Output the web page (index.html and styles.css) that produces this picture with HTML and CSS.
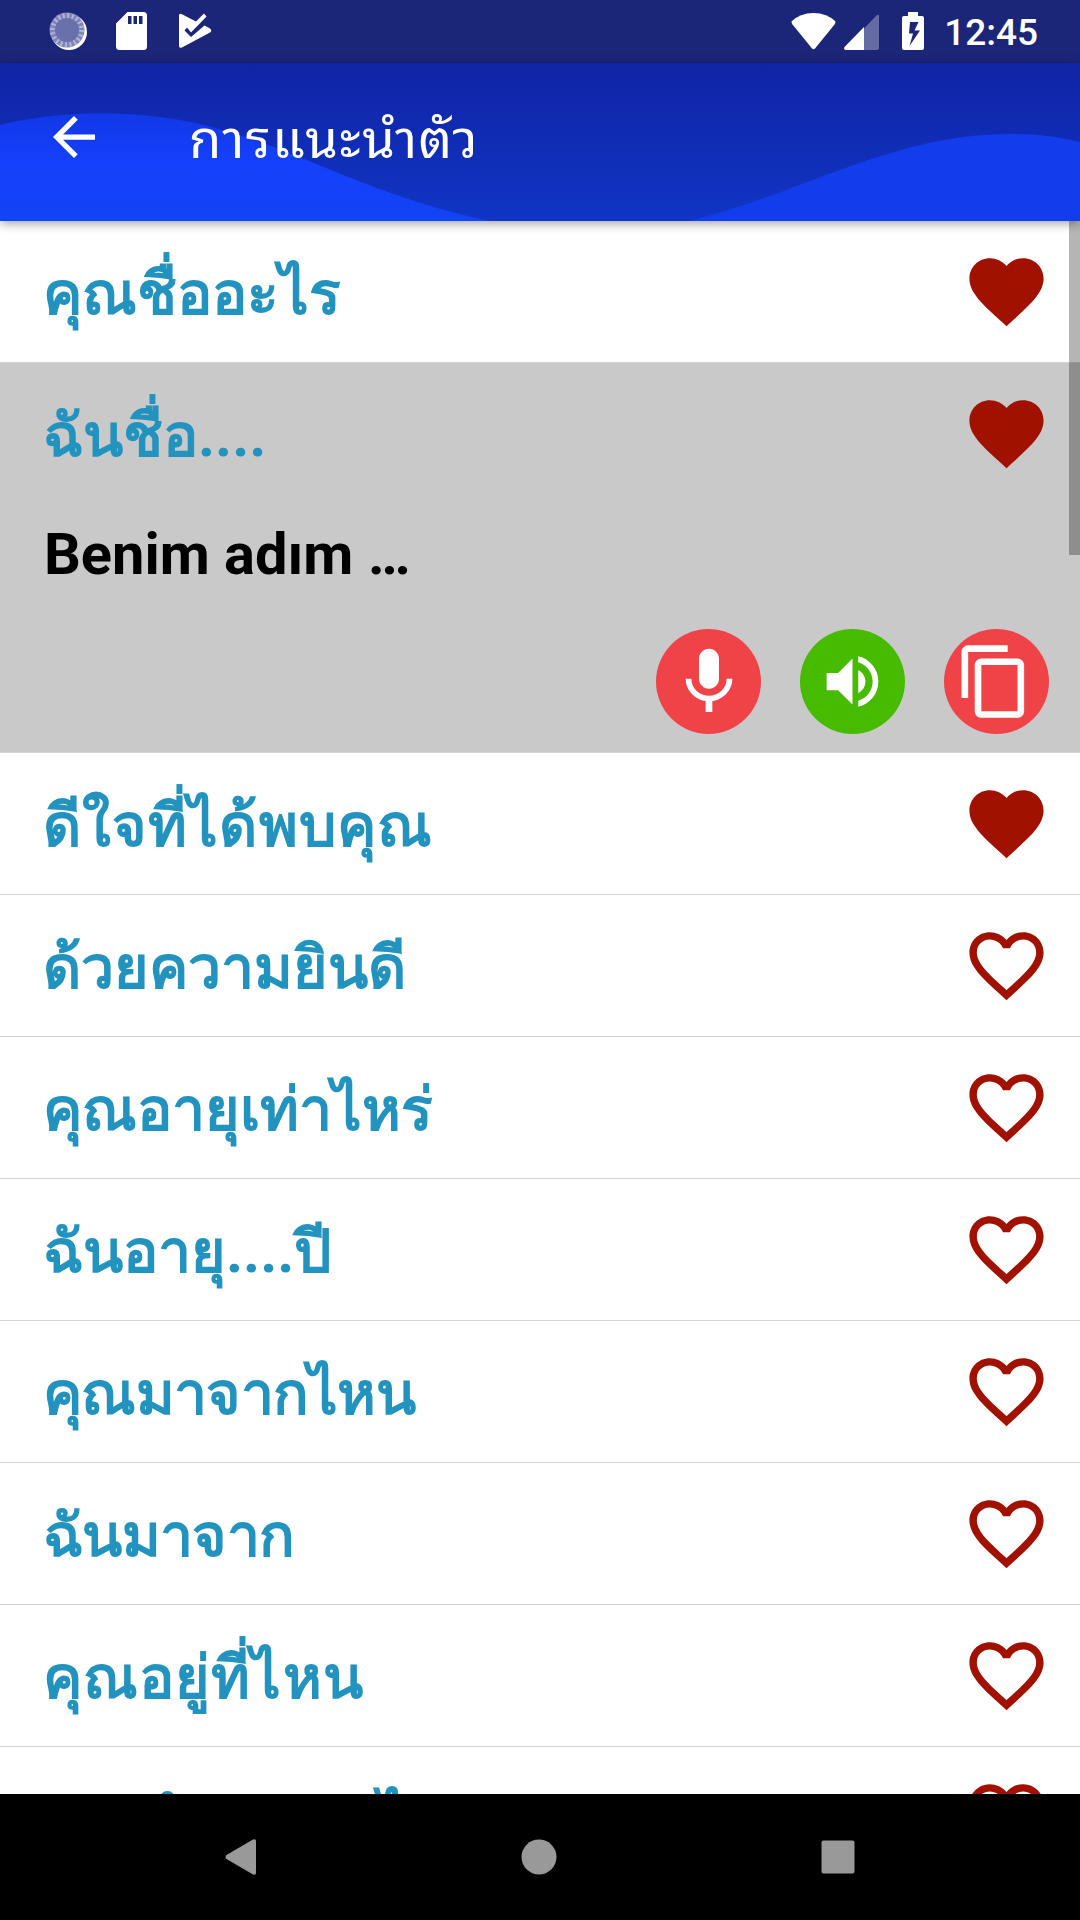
FILE: index.html
```html
<!DOCTYPE html>
<html lang="th">
<head>
    <meta charset="UTF-8">
    <meta name="viewport" content="width=device-width, initial-scale=1.0">
    <title>การแนะนำตัว</title>
    <link rel="stylesheet" href="styles.css">
</head>
<body>
    <svg class="sprite" width="0" height="0">
        <symbol id="heart" viewBox="0 0 24 24">
            <path d="M12 21.35l-1.45-1.32C5.4 15.36 2 12.28 2 8.5 2 5.42 4.42 3 7.5 3c1.74 0 3.41.81 4.5 2.09C13.09 3.81 14.76 3 16.5 3 19.58 3 22 5.42 22 8.5c0 3.78-3.4 6.86-8.55 11.54L12 21.35z"/>
        </symbol>
        <symbol id="heart-border" viewBox="0 0 24 24">
            <path d="M16.5 3c-1.74 0-3.41.81-4.5 2.09C10.91 3.81 9.24 3 7.5 3 4.42 3 2 5.42 2 8.5c0 3.78 3.4 6.86 8.55 11.54L12 21.35l1.45-1.32C18.6 15.36 22 12.28 22 8.5 22 5.42 19.58 3 16.5 3zm-4.4 15.55l-.1.1-.1-.1C7.14 14.24 4 11.39 4 8.5 4 6.5 5.5 5 7.5 5c1.54 0 3.04.99 3.57 2.36h1.87C13.46 5.99 14.96 5 16.5 5c2 0 3.5 1.5 3.5 3.5 0 2.89-3.14 5.74-7.9 10.05z"/>
        </symbol>
    </svg>

    <div class="status-bar">
        <div class="status-left">
            <svg width="38" height="38" viewBox="0 0 38 38">
                <circle cx="20" cy="20" r="18" fill="#fff"/>
                <circle cx="18" cy="18" r="17.5" fill="#8085b8"/>
                <circle cx="18" cy="18" r="14.5" fill="none" stroke="#b4b8d8" stroke-width="5" stroke-dasharray="1.8 2.75"/>
                <circle cx="18" cy="18" r="12" fill="#6a70ac"/>
            </svg>
            <svg width="31" height="38" viewBox="0 0 31 38">
                <path fill="#fff" fill-rule="evenodd" d="M11.500 0H27.500Q31 0 31 3.500V34.500Q31 38 27.500 38H3.500Q0 38 0 34.500V11.500zM12 4v8h3.500V4zM17.500 4v8H21V4zM23 4v8h3.500V4z"/>
            </svg>
            <svg width="33" height="36" viewBox="0 0 33 36">
                <path fill="#fff" d="M0 2.500Q0 0 2.500 1L17 8.500 25 .5l2.500 3L12 19.500 8 14.500 5.500 17.500 12 24 25.500 12.500 31 15.500Q33.500 17.500 31 19.500L3 34.500Q0 35.500 0 33z"/>
            </svg>
        </div>
        <div class="status-right">
            <svg class="wifi" width="45" height="37" viewBox="0 0 45 37">
                <path fill="#fff" d="M.5 8.500Q9 0 22.500 0T44.500 8.500Q44.500 10 43.500 11.500L24 35.500Q22.500 37 21 35.500L1.500 11.500Q.5 10 .5 8.500z"/>
            </svg>
            <svg class="signal" width="35" height="36" viewBox="0 0 35 36">
                <path fill="#fff" fill-opacity=".32" d="M20 14.500L32.500 1.500Q35 0 35 2V34Q35 36 33 36H20z"/>
                <path fill="#fff" d="M20 13V36H1.500Q-.5 35.500 .5 33z"/>
            </svg>
            <svg class="battery" width="22" height="38" viewBox="0 0 22 38">
                <path fill="#fff" fill-rule="evenodd" d="M6 0H16V4H20Q22 4 22 6V36Q22 38 20 38H2Q0 38 0 36V6Q0 4 2 4H6zM8 10L7 21.500h4L7.500 34 18 18.500H12.500L16.500 10z"/>
            </svg>
            <span class="clock">12:45</span>
        </div>
    </div>

    <header class="app-bar">
        <svg class="waves" viewBox="0 0 1080 158" preserveAspectRatio="none">
            <defs>
                <linearGradient id="waveLeft" x1="0" y1="0" x2="0" y2="1">
                    <stop offset="0" stop-color="#1238e6"/>
                    <stop offset=".45" stop-color="#1540fc"/>
                    <stop offset="1" stop-color="#1243f4"/>
                </linearGradient>
            </defs>
            <path fill="url(#waveLeft)" d="M0 62C60 47 135 46 200 61C300 85 365 132 490 158H0z"/>
            <path fill="#133dec" d="M688 158C800 132 890 71 1010 71Q1045 70 1080 79V158z"/>
        </svg>
        <svg class="back" width="42" height="42" viewBox="4 4 16 16">
            <path fill="#fff" d="M20 11H7.830l5.590-5.590L12 4l-8 8 8 8 1.410-1.410L7.830 13H20v-2z"/>
        </svg>
        <h1>การแนะนำตัว</h1>
    </header>

    <main class="phrases">
        <div class="phrase">
            <div class="phrase-head">
                <span class="phrase-text">คุณชื่ออะไร</span>
                <svg class="heart"><use href="#heart"/></svg>
            </div>
        </div>
        <div class="phrase open">
            <div class="phrase-head">
                <span class="phrase-text">ฉันชื่อ....</span>
                <svg class="heart"><use href="#heart"/></svg>
            </div>
            <div class="translation">Benim adım …</div>
            <div class="actions">
                <button class="round red">
                    <svg width="80" height="80" viewBox="0 0 24 24"><path d="M12 14c1.660 0 2.990-1.340 2.990-3L15 5c0-1.660-1.340-3-3-3S9 3.340 9 5v6c0 1.660 1.340 3 3 3zm5.300-3c0 3-2.540 5.100-5.300 5.100S6.700 14 6.700 11H5c0 3.410 2.720 6.230 6 6.720V21h2v-3.280c3.280-.48 6-3.300 6-6.720h-1.700z"/></svg>
                </button>
                <button class="round green">
                    <svg width="69" height="69" viewBox="0 0 24 24"><path d="M3 9v6h4l5 5V4L7 9H3zm13.500 3c0-1.770-1.020-3.290-2.500-4.030v8.050c1.480-.73 2.500-2.250 2.500-4.020zM14 3.230v2.060c2.890.86 5 3.540 5 6.710s-2.110 5.850-5 6.710v2.060c4.010-.91 7-4.490 7-8.770s-2.990-7.860-7-8.770z"/></svg>
                </button>
                <button class="round red copy">
                    <svg width="79" height="79" viewBox="0 0 24 24"><path d="M16 1H4c-1.100 0-2 .9-2 2v14h2V3h12V1zm3 4H8c-1.100 0-2 .9-2 2v14c0 1.100.9 2 2 2h11c1.100 0 2-.9 2-2V7c0-1.100-.9-2-2-2zm0 16H8V7h11v14z"/></svg>
                </button>
            </div>
        </div>
        <div class="phrase">
            <div class="phrase-head">
                <span class="phrase-text loose">ดีใจที่ได้พบคุณ</span>
                <svg class="heart"><use href="#heart"/></svg>
            </div>
        </div>
        <div class="phrase">
            <div class="phrase-head">
                <span class="phrase-text">ด้วยความยินดี</span>
                <svg class="heart"><use href="#heart-border"/></svg>
            </div>
        </div>
        <div class="phrase">
            <div class="phrase-head">
                <span class="phrase-text">คุณอายุเท่าไหร่</span>
                <svg class="heart"><use href="#heart-border"/></svg>
            </div>
        </div>
        <div class="phrase">
            <div class="phrase-head">
                <span class="phrase-text">ฉันอายุ....ปี</span>
                <svg class="heart"><use href="#heart-border"/></svg>
            </div>
        </div>
        <div class="phrase">
            <div class="phrase-head">
                <span class="phrase-text tight">คุณมาจากไหน</span>
                <svg class="heart"><use href="#heart-border"/></svg>
            </div>
        </div>
        <div class="phrase">
            <div class="phrase-head">
                <span class="phrase-text tight">ฉันมาจาก</span>
                <svg class="heart"><use href="#heart-border"/></svg>
            </div>
        </div>
        <div class="phrase">
            <div class="phrase-head">
                <span class="phrase-text loose">คุณอยู่ที่ไหน</span>
                <svg class="heart"><use href="#heart-border"/></svg>
            </div>
        </div>
        <div class="phrase">
            <div class="phrase-head">
                <span class="phrase-text">คุณทำงานอะไร</span>
                <svg class="heart"><use href="#heart-border"/></svg>
            </div>
        </div>
        <div class="scrollbar"></div>
    </main>

    <nav class="nav-bar">
        <svg width="36" height="36" viewBox="0 0 36 36"><path d="M31 .5Q34 -.5 34 2V34Q34 36.500 31 35.500L4.500 20Q2.500 18 4.500 16z"/></svg>
        <svg width="36" height="36" viewBox="0 0 36 36"><circle cx="18" cy="18" r="17.500"/></svg>
        <svg width="36" height="36" viewBox="0 0 36 36"><rect x="1.500" y="1.500" width="33" height="33" rx="2"/></svg>
    </nav>
</body>
</html>
```
FILE: styles.css
```css
* {
    box-sizing: border-box;
}

body {
    margin: 0;
    width: 1080px;
    height: 1920px;
    display: flex;
    flex-direction: column;
    overflow: hidden;
    background-color: #fff;
    font-family: Roboto, sans-serif;
}

svg {
    display: block;
    flex-shrink: 0;
}

.sprite {
    position: absolute;
}

.status-bar {
    height: 63px;
    flex-shrink: 0;
    display: flex;
    justify-content: space-between;
    padding: 12px 42px 0 49px;
    background-color: #1c2678;
}

.status-left {
    display: flex;
    gap: 29px;
}

.status-left svg:last-child {
    margin: 1px 0 0 3px;
}

.status-right {
    display: flex;
}

.signal {
    margin: 2px 0 0 8px;
}

.battery {
    margin: 0 20px 0 23px;
}

.wifi {
    margin-top: 1px;
}

.clock {
    color: #fff;
    font-size: 37px;
    font-weight: 500;
    line-height: 42px;
}

.app-bar {
    position: relative;
    z-index: 1;
    height: 158px;
    flex-shrink: 0;
    display: flex;
    align-items: center;
    padding: 0 53px 8px;
    background: linear-gradient(#1024a6, #1035c4);
    box-shadow: 0 2px 10px rgba(0, 0, 0, 0.4);
}

.waves {
    position: absolute;
    left: 0;
    top: 0;
    width: 100%;
    height: 100%;
}

.back {
    position: relative;
    margin-top: -3px;
}

.app-bar h1 {
    position: relative;
    margin: 3px 0 0 94px;
    color: #fff;
    font-family: Roboto, "Noto Sans Thai Looped", sans-serif;
    font-size: 52.5px;
    font-weight: 400;
    line-height: 80px;
    letter-spacing: 1.5px;
}

.phrases {
    position: relative;
    height: 1573px;
    flex-shrink: 0;
    overflow: hidden;
}

.phrase {
    border-bottom: 1px solid #d3d3d3;
}

.phrase-head {
    height: 141px;
    display: flex;
    align-items: center;
    justify-content: space-between;
    padding: 0 29px 0 43px;
}

.phrase-text {
    padding-top: 4px;
    color: #2293bf;
    font-size: 59px;
    font-weight: 700;
    line-height: 80px;
    white-space: nowrap;
}

.loose {
    letter-spacing: 1.1px;
}

.tight {
    letter-spacing: -0.7px;
}

.heart {
    width: 89px;
    height: 89px;
    fill: #a01100;
}

.open {
    height: 390px;
    background-color: #c9c9c9;
}

.translation {
    height: 125px;
    padding-left: 44px;
    font-size: 57.75px;
    font-weight: 700;
    line-height: 100px;
}

.actions {
    display: flex;
    justify-content: flex-end;
    gap: 39px;
    padding-right: 31px;
}

.round {
    width: 105px;
    height: 105px;
    display: flex;
    align-items: center;
    justify-content: center;
    padding: 0;
    border: none;
    border-radius: 50%;
    fill: #fff;
}

.red {
    background-color: #f04348;
}

.green {
    background-color: #46bb00;
}

.copy {
    padding-right: 5px;
}

.scrollbar {
    position: absolute;
    top: 0;
    right: 0;
    width: 11px;
    height: 334px;
    background-color: rgba(0, 0, 0, 0.29);
}

.nav-bar {
    height: 126px;
    flex-shrink: 0;
    display: flex;
    align-items: center;
    justify-content: space-between;
    padding: 0 224px 0 222px;
    background-color: #000;
    fill: #999;
}
```
